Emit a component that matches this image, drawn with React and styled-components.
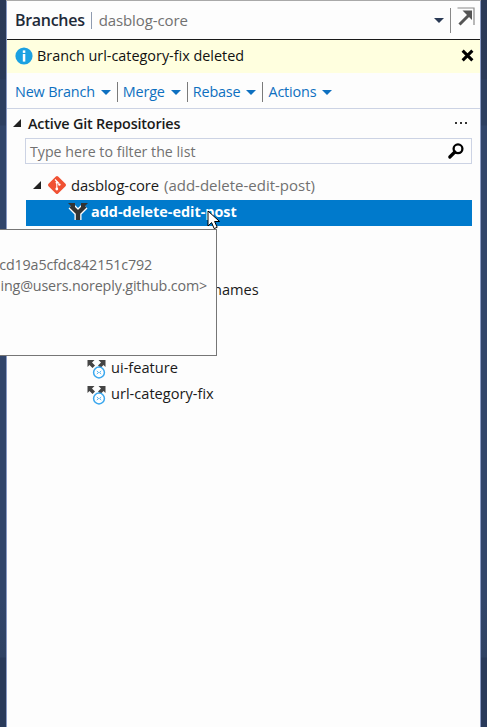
import React from 'react';
import styled, { createGlobalStyle } from 'styled-components';

const Global = createGlobalStyle`
  html, body { margin: 0; padding: 0; height: 100%; overflow: hidden; background: #2a3a5a; }
  #root { height: 100%; }
`;
const font = `"Open Sans", "Noto Sans", "Liberation Sans", sans-serif`;

const Frame = styled.div`
  position: relative; width: 487px; height: 727px; box-sizing: border-box; overflow: hidden;
  padding: 1px 6px 0 6px; font-family: ${font};
  background: linear-gradient(#2a3957 0, #2a3a58 79px, #2d3f60 80px, #2d3f60 125px, #31456a 126px, #31456a 600px, #2f4263 657px, #293a5a 658px);
`;
const TopLine = styled.div`position: absolute; left: 6px; right: 6px; top: 0; height: 1px; background: #a9a9a9;`;
const Panel = styled.div`
  height: 100%; box-sizing: border-box; background: #fdfdfd;
  border-left: 1px solid #8a9bc4; border-right: 1px solid #8a9bc4;
  display: flex; flex-direction: column;
`;
const Header = styled.div`
  height: 39px; box-sizing: border-box; display: flex; align-items: center; padding: 0 0 0 8px; flex: none;
  border-bottom: 1px solid #1a1a1a;
`;
const Title = styled.span`font-size: 16px; font-weight: 600; color: #1e2a38; letter-spacing: -0.3px;`;
const TitleSep = styled.span`width: 1px; height: 17px; background: #8f9bb0; margin: 0 7px 0 6px;`;
const Repo = styled.span`font-size: 15px; color: #717171; letter-spacing: -0.1px;`;
const HeaderRight = styled.div`margin-left: auto; display: flex; align-items: center;`;
const Caret = styled.span`
  display: inline-block; width: 0; height: 0; border-left: 5px solid transparent; border-right: 5px solid transparent;
  border-top: 5px solid ${p => p.$color};
`;
const HeaderDivider = styled.span`width: 1px; height: 25px; background: #888; margin: 0 6px 0 6px;`;
const PopOut = styled.svg`width: 18px; height: 20px; margin: -7px 5px 0 0; display: block;`;

const Banner = styled.div`
  height: 33px; flex: none; box-sizing: border-box; background: #ffffdf; display: flex; align-items: center;
  padding: 0 5px 2px 8px; font-size: 14.4px; color: #111;
`;
const InfoDot = styled.svg`width: 18px; height: 18px; margin-right: 4px; flex: none;`;
const Close = styled.svg`width: 13px; height: 13px; margin-left: auto; margin-right: 1px;`;

const Toolbar = styled.div`
  height: 36px; flex: none; box-sizing: border-box; border-bottom: 1px solid #ccd3e4;
  display: flex; align-items: center; padding: 2px 0 0 8px;
`;
const Action = styled.span`
  font-size: 14.4px; color: #0e70c0; letter-spacing: -0.17px; display: inline-flex; align-items: center;
`;
const ActionCaret = styled(Caret)`margin-left: 6px; margin-top: 2px;`;
const ToolSep = styled.span`width: 1px; height: 20px; background: #7a7a7a; margin: 0 5px 0 6px;`;

const Section = styled.div`
  height: 29px; box-sizing: border-box; display: flex; align-items: center; padding: 0 0 1px 6px; flex: none;
  font-size: 14.4px; font-weight: 600; color: #1a1a1a; letter-spacing: -0.17px;
`;
const Expand = styled.span`
  width: 0; height: 0; border-style: solid; border-width: 0 0 ${p => p.$s}px ${p => p.$s}px;
  border-color: transparent transparent #222 transparent; margin-right: ${p => p.$gap}px;
`;
const Dots = styled.span`margin-left: auto; margin-right: 13px; display: flex; gap: 3px;`;
const Dot = styled.i`width: 2px; height: 2px; background: #333; display: block;`;

const Filter = styled.div`
  height: 26px; box-sizing: border-box; margin: 0 8px 0 18px; border: 1px solid #ccd3e4; flex: none;
  display: flex; align-items: center; padding: 0 6px 0 4px; background: #fdfdfd;
  font-size: 14.2px; color: #717171;
`;
const Search = styled.svg`width: 18px; height: 18px; margin-left: auto;`;

const Tree = styled.div`padding-top: 8px; display: flex; flex-direction: column;`;
const RepoRow = styled.div`
  height: 28px; box-sizing: border-box; display: flex; align-items: center; padding: 0 0 3px 26px;
  font-size: 14.8px; color: #1a1a1a; letter-spacing: -0.1px;
`;
const Muted = styled.span`color: #717171; margin-left: 5px; font-size: 15px; letter-spacing: 0;`;
const Selected = styled.div`
  height: 26px; box-sizing: border-box; margin: 0 8px 0 19px; background: #007acc; color: #fff; font-weight: 700; font-size: 14.4px;
  display: flex; align-items: center; padding: 0 0 3px 41px;
`;
const Row = styled.div`
  height: 26px; box-sizing: border-box; display: flex; align-items: center; padding: 0 0 4px ${p => p.$indent}px;
  font-size: 14.6px; color: #1a1a1a;
`;
const RowName = styled.span`margin-left: 4px;`;
const Tooltip = styled.div`
  position: absolute; left: -1px; top: 229px; width: 218px; height: 127px; box-sizing: border-box;
  background: #fdfdfd; border: 1px solid #767676; color: #6a6a6a; font-size: 14.3px; letter-spacing: -0.15px;
  padding-top: 24px; overflow: hidden;
`;
const TipLine = styled.div`
  height: 21px; line-height: 21px; white-space: nowrap; display: flex; justify-content: flex-end;
  padding-right: ${p => p.$right}px;
`;
const Cursor = styled.svg`position: absolute; left: 207px; top: 210px; width: 15px; height: 20px;`;

const GitIcon = styled.svg`width: 20px; height: 20px; margin-right: 4px; flex: none;`;
const BranchSvg = styled.svg`width: 22px; height: 20px; margin-right: 2px; flex: none;`;
const RemoteSvg = styled.svg`width: 20px; height: 21px; flex: none; margin-top: 2px;`;

const Remote = () => (
  <RemoteSvg viewBox="0 0 20 21">
    <path d="M0.500 2h7l-2.500 2.500 3 3-2.500 2.500-3-3-2 2z" fill="#444" />
    <path d="M18.500 2h-7l2.500 2.500-3 3 2.500 2.500 3-3 2 2z" fill="#444" />
    <circle cx="12" cy="14.500" r="5.400" fill="#fff" stroke="#3aa7ee" strokeWidth="1.500" />
    <path d="M9.800 13l1.800 1.500-1.800 1.500M14.200 13l-1.600 1.500 1.600 1.500" fill="none" stroke="#3aa7ee" strokeWidth="0.900" />
  </RemoteSvg>
);

export default function App() {
  return (
    <Frame>
      <Global />
      <TopLine />
      <Panel>
        <Header>
          <Title>Branches</Title>
          <TitleSep />
          <Repo>dasblog-core</Repo>
          <HeaderRight>
            <Caret $color="#2a3a55" />
            <HeaderDivider />
            <PopOut viewBox="0 0 18 20">
              <path d="M0.500 1h16.500v17" fill="none" stroke="#8a8a8a" strokeWidth="1.200" />
              <path d="M2.500 17.500L12.500 7.500" stroke="#555" strokeWidth="3" fill="none" />
              <path d="M5.500 3.500h9.500v9.500z" fill="#555" />
            </PopOut>
          </HeaderRight>
        </Header>
        <Banner>
          <InfoDot viewBox="0 0 18 18">
            <circle cx="9" cy="9" r="8.600" fill="#1ba1e2" />
            <rect x="7.800" y="3.400" width="2.500" height="2.500" fill="#fff" />
            <rect x="7.800" y="7" width="2.500" height="7.600" fill="#fff" />
          </InfoDot>
          Branch url-category-fix deleted
          <Close viewBox="0 0 12 12">
            <path d="M1.500 1.500l9 9M10.500 1.500l-9 9" stroke="#000" strokeWidth="2.800" />
          </Close>
        </Banner>
        <Toolbar>
          <Action>New Branch<ActionCaret $color="#0e70c0" /></Action>
          <ToolSep />
          <Action>Merge<ActionCaret $color="#0e70c0" /></Action>
          <ToolSep />
          <Action>Rebase<ActionCaret $color="#0e70c0" /></Action>
          <ToolSep />
          <Action>Actions<ActionCaret $color="#0e70c0" /></Action>
        </Toolbar>
        <Section>
          <Expand $s={8} $gap={7} />
          Active Git Repositories
          <Dots><Dot /><Dot /><Dot /></Dots>
        </Section>
        <Filter>
          Type here to filter the list
          <Search viewBox="0 0 18 18">
            <circle cx="11" cy="6.800" r="4.400" fill="none" stroke="#000" strokeWidth="2.300" />
            <path d="M7.800 10l-5 5" stroke="#000" strokeWidth="3.200" strokeLinecap="round" />
          </Search>
        </Filter>
        <Tree>
          <RepoRow>
            <Expand $s={8} $gap={6} />
            <GitIcon viewBox="0 0 20 20">
              <rect x="3.200" y="3.200" width="13.600" height="13.600" rx="1.600" fill="#f05133" transform="rotate(45 10 10)" />
              <path d="M8 4.500l4 4M9.800 6.600v7" stroke="#fff" strokeWidth="1.100" fill="none" />
              <circle cx="9.800" cy="14" r="1.400" fill="#fff" />
              <circle cx="9.800" cy="7.600" r="1.200" fill="#fff" />
              <circle cx="12.400" cy="9.600" r="1.200" fill="#fff" />
            </GitIcon>
            dasblog-core<Muted>(add-delete-edit-post)</Muted>
          </RepoRow>
          <Selected>
            <BranchSvg viewBox="0 0 22 20">
              <path d="M4 4L11 11L18 4M11 11V18" fill="none" stroke="#fff" strokeWidth="7" />
              <path d="M4 4L11 11L18 4M11 11V18" fill="none" stroke="#333" strokeWidth="4.400" />
              <path d="M1 1h7v7zM21 1h-7v7z" fill="#333" />
            </BranchSvg>
            add-delete-edit-post
          </Selected>
          <Row />
          <Row />
          <Row $indent={206}>names</Row>
          <Row />
          <Row />
          <Row $indent={80}><Remote /><RowName>ui-feature</RowName></Row>
          <Row $indent={80}><Remote /><RowName>url-category-fix</RowName></Row>
        </Tree>
      </Panel>
      <Tooltip>
        <TipLine $right={64}>cd19a5cfdc842151c792</TipLine>
        <TipLine $right={9}>ing@users.noreply.github.com&gt;</TipLine>
      </Tooltip>
      <Cursor viewBox="0 0 15 20">
        <path d="M1 1v15l3.600-3.400 2.600 6 3-1.300-2.600-5.800h5z" fill="#fff" stroke="#000" strokeWidth="1" />
      </Cursor>
    </Frame>
  );
}
